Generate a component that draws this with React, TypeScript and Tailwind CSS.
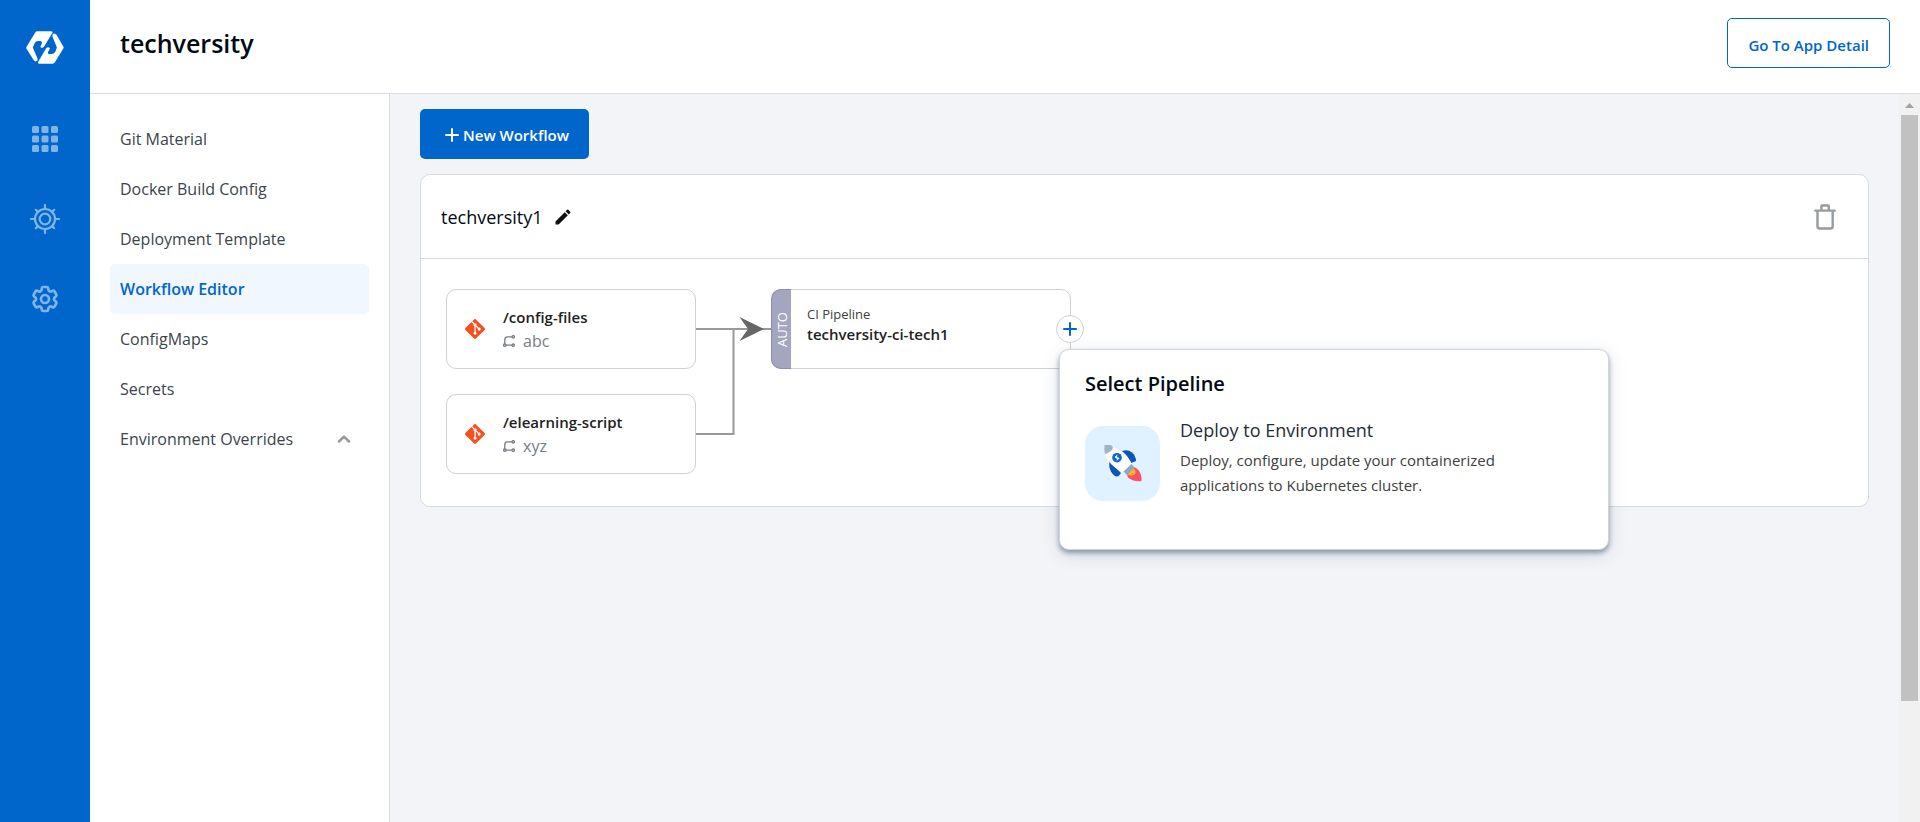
import React from "react";
import { MdEdit } from "react-icons/md";
import { SiGit } from "react-icons/si";
import { HiOutlineCog6Tooth } from "react-icons/hi2";

const navItems = [
  "Git Material",
  "Docker Build Config",
  "Deployment Template",
  "Workflow Editor",
  "ConfigMaps",
  "Secrets",
];

function Logo() {
  return (
    <svg viewBox="78 92 114 100" className="h-[33px] w-[38px]" fill="#fff" aria-hidden="true">
      <path d="M112 93H153Q160 93 157 98L132 140Q125 147 121 140L126 128Q127 123 120 122H114Q107 122 104 128L98 142L113 177Q112 186 105 184L101 181L79 146Q77 142 80 138L105 97Q108 93 112 93Z" />
      <path d="M158 191H118Q112 191 114 186L138 145Q145 138 150 145L144 156Q142 162 148 162H155Q162 162 166 156L171 142L157 107Q158 98 165 100L170 103L190 138Q193 142 190 146L165 187Q162 191 158 191Z" />
    </svg>
  );
}

function GridIcon() {
  const steps = [0, 9.5, 19];
  return (
    <svg viewBox="0 0 26 26" className="h-[26px] w-[26px]" fill="currentColor" aria-hidden="true">
      {steps.map((y) =>
        steps.map((x) => <rect key={`${x}-${y}`} x={x} y={y} width="7" height="7" rx="1.5" />)
      )}
    </svg>
  );
}

function HelmIcon() {
  const angles = [0, 45, 90, 135, 180, 225, 270, 315];
  return (
    <svg
      viewBox="0 0 30 30"
      className="h-[30px] w-[30px]"
      fill="none"
      stroke="currentColor"
      strokeWidth="2.2"
      strokeLinecap="round"
      aria-hidden="true"
    >
      <circle cx="15" cy="15" r="10" />
      <circle cx="15" cy="15" r="5.3" />
      {angles.map((a) => (
        <path key={a} d={a % 90 === 0 ? "M15 5V1" : "M15 5V2"} transform={`rotate(${a} 15 15)`} />
      ))}
    </svg>
  );
}

function TrashIcon() {
  return (
    <svg
      viewBox="0 0 22 26"
      className="h-[26px] w-[22px]"
      fill="none"
      stroke="#959ba1"
      strokeWidth="2.4"
      strokeLinecap="round"
      strokeLinejoin="round"
      aria-hidden="true"
    >
      <path d="M1.3 6.6H20.7M3.5 7V22.2Q3.5 24.5 5.8 24.5H16.4Q18.7 24.5 18.7 22.2V7M7.4 6V2.2Q7.4 1.5 8 1.5H14Q14.8 1.5 14.8 2.2V6" />
    </svg>
  );
}

function BranchIcon() {
  return (
    <svg
      viewBox="0 0 12 12"
      className="h-3 w-3"
      fill="none"
      stroke="#767d84"
      strokeWidth="1.3"
      aria-hidden="true"
    >
      <circle cx="10.2" cy="1.8" r="1.2" />
      <circle cx="1.8" cy="10.2" r="1.2" />
      <circle cx="10.2" cy="10.2" r="1.2" />
      <path d="M9 1.8H4.5Q1.8 1.8 1.8 4.5V9M3 10.2H9" />
    </svg>
  );
}

function PlusIcon({ className }: { className: string }) {
  return (
    <svg
      viewBox="0 0 14 14"
      className={className}
      fill="none"
      stroke="currentColor"
      strokeWidth="2"
      strokeLinecap="round"
      aria-hidden="true"
    >
      <path d="M7 1V13M1 7H13" />
    </svg>
  );
}

function RocketIcon() {
  return (
    <svg viewBox="0 0 38 38" className="h-[38px] w-[38px]" aria-hidden="true">
      <path d="M18 6Q24 4 28 7.500Q32 11 32 16L26 18.500Z" fill="#0b55b8" />
      <path d="M5.500 16.500Q4.500 22 7 26.500Q10 31.500 13 31.500Q15 31.500 17 28Z" fill="#0b55b8" />
      <path d="M30 22Q36 24 37.500 32.500V36Q29 37 24 32.500L23 29.500Z" fill="#ff4f64" />
      <path d="M28 22.500Q33 25 31 29Q28 32 23.500 29.500Z" fill="#fcb32c" />
      <path d="M1 0.500L9 2.500Q18 4.500 23 11Q27 16 28.500 21L21.500 28Q14 26 7 19Q2 13 1 9Z" fill="#fff" />
      <path d="M0.500 0H6.500Q8.500 0.500 9 3Q7 7.500 1 9Q0 5 0.500 0Z" fill="#9fb3c8" />
      <path d="M27.500 19L30.500 22.500L23 30L19.500 26.500Z" fill="#8fa5bd" />
      <circle cx="13" cy="12.700" r="4.800" fill="#0b66cf" />
      <path d="M10.500 12L13.500 9.500L12.500 14L11.500 13ZM15.500 13.500L12.500 16L13.500 11.500L14.500 12.500Z" fill="#fff" />
    </svg>
  );
}

function SourceNode({ name, branch, className }: { name: string; branch: string; className: string }) {
  return (
    <div
      className={`absolute left-[25px] flex h-20 w-[250px] items-center rounded-[10px] border border-[#d0d0d2] bg-white pl-[18px] ${className}`}
    >
      <SiGit className="h-5 w-5 shrink-0 text-[#f4511e]" aria-hidden="true" />
      <div className="ml-[18px]">
        <div className="text-[15px] leading-6 font-semibold text-[#222]">{name}</div>
        <div className="flex items-center gap-2 text-base leading-6 text-[#767d84]">
          <BranchIcon />
          {branch}
        </div>
      </div>
    </div>
  );
}

export default function App() {
  return (
    <div className="flex h-screen overflow-hidden bg-white font-['Open_Sans','Noto_Sans',sans-serif] text-[#000a14]">
      <aside className="flex w-[90px] shrink-0 flex-col items-center bg-[#0066cc] pt-[31px]">
        <a href="#" aria-label="Home">
          <Logo />
        </a>
        <nav className="mt-[35px] flex flex-col text-[#80b3e6]" aria-label="Main">
          <a href="#apps" aria-label="Applications" className="flex h-20 w-20 items-center justify-center">
            <GridIcon />
          </a>
          <a href="#charts" aria-label="Charts" className="flex h-20 w-20 items-center justify-center">
            <HelmIcon />
          </a>
          <a href="#settings" aria-label="Settings" className="flex h-20 w-20 items-center justify-center">
            <HiOutlineCog6Tooth className="h-8 w-8 stroke-2" />
          </a>
        </nav>
      </aside>

      <div className="flex min-w-0 flex-1 flex-col">
        <header className="flex h-[94px] shrink-0 items-start justify-between border-b border-[#d6dbdf] pt-[18px] pr-[30px] pl-[30px]">
          <h1 className="text-[25px] leading-[50px] font-semibold">techversity</h1>
          <button
            type="button"
            className="h-[50px] rounded-[5px] border border-[#0066cc] bg-white px-5 pt-1 text-[15px] font-semibold text-[#0066cc]"
          >
            Go To App Detail
          </button>
        </header>

        <div className="flex min-h-0 flex-1">
          <nav
            className="w-[300px] shrink-0 border-r border-[#d6dbdf] pt-5 pr-5 pl-5 text-base"
            aria-label="App configuration"
          >
            {navItems.map((item) => (
              <a
                key={item}
                href="#"
                className={
                  item === "Workflow Editor"
                    ? "flex h-[50px] items-center rounded-[5px] bg-[#f0f7ff] px-[10px] font-semibold text-[#0066cc]"
                    : "flex h-[50px] items-center px-[10px] text-[#3b444c]"
                }
              >
                {item}
              </a>
            ))}
            <button
              type="button"
              className="flex h-[50px] w-full items-center justify-between pr-[18px] pl-[10px] text-[#3b444c]"
            >
              Environment Overrides
              <svg
                viewBox="0 0 14 8"
                className="h-2 w-[14px]"
                fill="none"
                stroke="#999"
                strokeWidth="2.500"
                strokeLinecap="round"
                strokeLinejoin="round"
                aria-hidden="true"
              >
                <path d="M2 6.500L7 1.700L12 6.500" />
              </svg>
            </button>
          </nav>

          <main className="min-w-0 flex-1 bg-[#f2f4f7] px-[30px] pt-[15px]">
            <button
              type="button"
              className="flex h-[50px] items-center gap-1 rounded-[5px] bg-[#0066cc] pt-[2px] pr-5 pl-[25px] text-[15px] font-semibold text-white"
            >
              <PlusIcon className="h-[14px] w-[14px]" />
              New Workflow
            </button>

            <section className="mt-[15px] rounded-[10px] border border-[#d6dbdf] bg-white">
              <div className="flex h-[84px] items-center justify-between border-b border-[#d6dbdf] pr-8 pl-5">
                <div className="flex items-center gap-[10px]">
                  <h2 className="text-lg font-medium">techversity1</h2>
                  <button type="button" aria-label="Rename workflow">
                    <MdEdit className="h-5 w-5 text-[#111]" />
                  </button>
                </div>
                <button type="button" aria-label="Delete workflow">
                  <TrashIcon />
                </button>
              </div>

              <div className="relative h-[247px]">
                <svg
                  viewBox="0 0 75 120"
                  className="absolute top-[60px] left-[275px] h-[120px] w-[75px] overflow-visible"
                  fill="none"
                  stroke="#999"
                  strokeWidth="2"
                  aria-hidden="true"
                >
                  <path d="M0 10H75M0 115H37.500V10" />
                  <path d="M43.500 -2L68 10L43.500 22L52 10Z" fill="#666" stroke="none" />
                </svg>
                <SourceNode name="/config-files" branch="abc" className="top-[30px]" />
                <SourceNode name="/elearning-script" branch="xyz" className="top-[135px]" />

                <div className="absolute top-[30px] left-[350px] flex h-20 w-[300px] rounded-[10px] border border-[#d0d0d2] bg-white">
                  <div className="-my-px -ml-px flex w-5 items-center justify-center rounded-l-[10px] border border-r-0 border-[#8c8eae] bg-[#a4a6bf]">
                    <span className="rotate-180 text-[13px] leading-5 text-white [writing-mode:vertical-rl]">
                      AUTO
                    </span>
                  </div>
                  <div className="flex flex-col pt-[14px] pl-4">
                    <span className="text-[13px] leading-5 text-[#404040]">CI Pipeline</span>
                    <span className="text-[15px] leading-5 font-semibold text-[#222]">techversity-ci-tech1</span>
                  </div>
                </div>

                <button
                  type="button"
                  aria-label="Add pipeline"
                  className="absolute top-[56px] left-[635px] flex h-7 w-7 items-center justify-center rounded-full border border-[#d0d0d2] bg-white text-[#0066cc]"
                >
                  <PlusIcon className="h-[14px] w-[14px]" />
                </button>

                <div
                  role="dialog"
                  aria-label="Select Pipeline"
                  className="absolute top-[90px] left-[638px] h-[201px] w-[550px] rounded-[10px] border border-[#d0d5da] bg-white px-[25px] pt-5 shadow-[0_3px_5px_0_rgba(0,30,60,0.4),0_5px_20px_0_rgba(0,50,100,0.12)]"
                >
                  <h3 className="text-xl leading-7 font-semibold">Select Pipeline</h3>
                  <a href="#deploy" className="mt-5 flex gap-5">
                    <span className="mt-2 flex h-[75px] w-[75px] shrink-0 items-center justify-center rounded-[18px] bg-[#e0f2ff]">
                      <RocketIcon />
                    </span>
                    <span className="flex max-w-[340px] flex-col">
                      <span className="text-lg leading-[25px] text-[#242c38]">Deploy to Environment</span>
                      <span className="mt-[5px] text-[15px] leading-[25px] text-[#404040]">
                        Deploy, configure, update your containerized applications to Kubernetes cluster.
                      </span>
                    </span>
                  </a>
                </div>
              </div>
            </section>
          </main>

          <div className="flex w-[21px] shrink-0 flex-col items-center bg-[#f1f1f1]" aria-hidden="true">
            <svg viewBox="0 0 21 21" className="h-[21px] w-[21px]" fill="#a3a3a3">
              <path d="M6 14L10.500 9L15 14Z" />
            </svg>
            <div className="h-[80.5%] w-[17px] bg-[#c1c1c1]" />
          </div>
        </div>
      </div>
    </div>
  );
}
